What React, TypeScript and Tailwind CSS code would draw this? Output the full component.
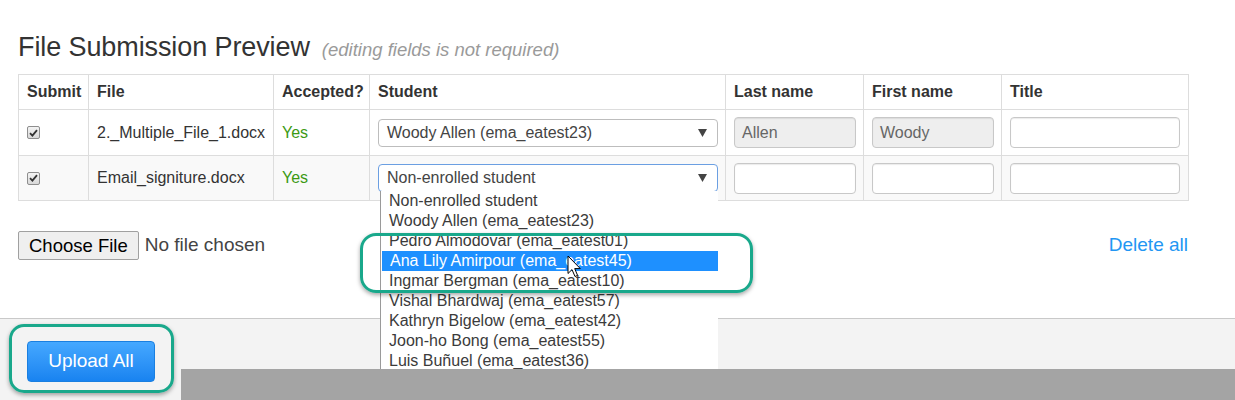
const STUDENTS = [
  "Non-enrolled student",
  "Woody Allen (ema_eatest23)",
  "Pedro Almodovar (ema_eatest01)",
  "Ana Lily Amirpour (ema_eatest45)",
  "Ingmar Bergman (ema_eatest10)",
  "Vishal Bhardwaj (ema_eatest57)",
  "Kathryn Bigelow (ema_eatest42)",
  "Joon-ho Bong (ema_eatest55)",
  "Luis Buñuel (ema_eatest36)",
];

function Check() {
  return (
    <div className="w-[13px] h-[13px] rounded-[2px] border border-[#8e8e8e] bg-gradient-to-b from-[#f4f4f4] to-[#d8d8d8] flex items-center justify-center">
      <svg width="9" height="8" viewBox="0 0 9 8">
        <path d="M1 4.2 L3.4 6.6 L8 1.2" fill="none" stroke="#333" strokeWidth="1.8" />
      </svg>
    </div>
  );
}

function Select({ value, focused }: { value: string; focused?: boolean }) {
  return (
    <div
      className={`h-[28px] rounded-[4px] border bg-white flex items-center justify-between pl-[8px] pr-[10px] ${
        focused ? "border-[#6b9fe2]" : "border-[#bdbdbd]"
      }`}
    >
      <span className="text-[16px] text-[#444]">{value}</span>
      <svg width="9" height="8" viewBox="0 0 9 8">
        <polygon points="0,0 9,0 4.5,8" fill="#444" />
      </svg>
    </div>
  );
}

function Field({ value, disabled }: { value?: string; disabled?: boolean }) {
  return (
    <div
      className={`h-[31px] rounded-[4px] border border-[#c8c8c8] shadow-[inset_0_1px_1px_rgba(0,0,0,0.08)] flex items-center px-[7px] text-[16px] text-[#666] ${
        disabled ? "bg-[#eeeeee]" : "bg-white"
      }`}
    >
      {value}
    </div>
  );
}

const th = "border border-[#dddddd] px-[8px] text-left font-bold text-[16px] text-[#333]";
const td = "border border-[#dddddd] px-[8px] align-middle text-[16px] text-[#333]";

export default function App() {
  return (
    <div className="relative w-[1235px] h-[400px] overflow-hidden bg-white font-['Liberation_Sans',Arial,sans-serif]">
      <div className="px-[18px] pt-[29px]">
        {/* ── Title ── */}
        <div className="h-[36px] flex items-baseline gap-[12px] text-[#333]">
          <span className="text-[27px] leading-[36px] tracking-[-0.1px]">File Submission Preview</span>
          <span className="text-[18.5px] italic text-[#9a9a9a]">(editing fields is not required)</span>
        </div>

        {/* ── Table ── */}
        <table className="mt-[9px] w-[1170px] border-collapse table-fixed">
          <colgroup>
            <col className="w-[70px]" />
            <col className="w-[185px]" />
            <col className="w-[96px]" />
            <col className="w-[356px]" />
            <col className="w-[138px]" />
            <col className="w-[138px]" />
            <col className="w-[187px]" />
          </colgroup>
          <thead>
            <tr className="h-[35px]">
              <th className={th}>Submit</th>
              <th className={th}>File</th>
              <th className={th}>Accepted?</th>
              <th className={th}>Student</th>
              <th className={th}>Last name</th>
              <th className={th}>First name</th>
              <th className={th}>Title</th>
            </tr>
          </thead>
          <tbody>
            <tr className="h-[46px]">
              <td className={td}><Check /></td>
              <td className={td}>2._Multiple_File_1.docx</td>
              <td className={`${td} !text-[#3c9a14]`}>Yes</td>
              <td className={`${td} pr-[7px]`}><Select value="Woody Allen (ema_eatest23)" /></td>
              <td className={`${td} pr-[7px]`}><Field value="Allen" disabled /></td>
              <td className={`${td} pr-[7px]`}><Field value="Woody" disabled /></td>
              <td className={td}><Field /></td>
            </tr>
            <tr className="h-[45px] bg-[#f9f9f9]">
              <td className={td}><Check /></td>
              <td className={td}>Email_signiture.docx</td>
              <td className={`${td} !text-[#3c9a14]`}>Yes</td>
              <td className={`${td} pr-[7px]`}>
                <div className="relative">
                  <Select value="Non-enrolled student" focused />
                  {/* open option list */}
                  <div className="absolute left-[2px] right-0 top-[27px] z-10 h-[178px] overflow-hidden bg-white border-l border-[#9a9a9a]">
                    {STUDENTS.map((s, i) => (
                      <div
                        key={s}
                        className={`h-[20px] leading-[20px] pl-[8px] text-[16px] whitespace-nowrap ${
                          i === 3 ? "bg-[#1e90ff] text-white ml-[1px] pl-[7px]" : "text-[#3b3b3b]"
                        }`}
                      >
                        {s}
                      </div>
                    ))}
                  </div>
                </div>
              </td>
              <td className={`${td} pr-[7px]`}><Field /></td>
              <td className={`${td} pr-[7px]`}><Field /></td>
              <td className={td}><Field /></td>
            </tr>
          </tbody>
        </table>

        {/* ── File picker row ── */}
        <div className="mt-[30px] w-[1170px] h-[29px] flex items-center justify-between">
          <div className="flex items-center gap-[6px]">
            <div className="h-[29px] px-[10px] flex items-center rounded-[2px] border border-[#a0a0a0] bg-[#efefef] text-[18.5px] text-black">
              Choose File
            </div>
            <span className="text-[19px] text-[#444]">No file chosen</span>
          </div>
          <span className="text-[19px] text-[#2196f3]">Delete all</span>
        </div>
      </div>

      {/* ── Footer ── */}
      <div className="mt-[58px] border-t border-[#c9c9c9] h-[83px] flex">
        <div className="w-[181px] bg-[#f3f3f3] pl-[27px] pt-[22px]">
          <div className="w-[128px] h-[41px] rounded-[4px] border border-[#1a7fe0] bg-gradient-to-b from-[#45a8ff] to-[#1883f0] flex items-center justify-center text-[19px] text-white">
            Upload All
          </div>
        </div>
        <div className="flex-1 flex flex-col">
          <div className="h-[50px] bg-[#f3f3f3]" />
          <div className="flex-1 bg-[#a4a4a4]" />
        </div>
      </div>

      {/* ── Annotations ── */}
      <div className="absolute left-[360px] top-[233px] w-[393px] h-[60px] rounded-[16px] border-[3px] border-[#19a88b] shadow-[0_2px_4px_rgba(0,0,0,0.35)] z-20" />
      <div className="absolute left-[9px] top-[324px] w-[165px] h-[69px] rounded-[15px] border-[3px] border-[#19a88b] shadow-[0_2px_4px_rgba(0,0,0,0.35)] z-20" />

      {/* mouse cursor */}
      <svg className="absolute left-[567px] top-[255px] z-30" width="15" height="24" viewBox="0 0 15 24">
        <path d="M1 1 L1 18.5 L5 14.6 L8 21.5 L10.6 20.4 L7.7 13.6 L13.3 13.6 Z" fill="white" stroke="black" strokeWidth="1" strokeLinejoin="round" />
      </svg>
    </div>
  );
}
